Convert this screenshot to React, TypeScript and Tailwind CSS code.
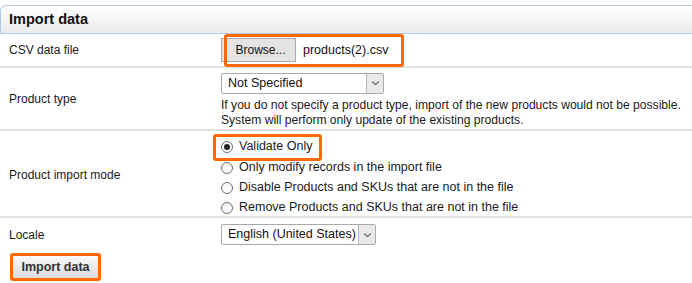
import React from 'react';

function Chevron() {
  return (
    <svg width="9" height="6" viewBox="0 0 9 6" fill="none">
      <path d="M1 1.5 L4.5 4.5 L8 1.5" stroke="#666" strokeWidth="1.1" />
    </svg>
  );
}

function Select({ value, width }: { value: string; width: string }) {
  return (
    <div className={`flex h-[21px] items-stretch rounded-[2px] border border-[#a9a9a9] bg-white ${width}`}>
      <span className="flex-1 overflow-hidden whitespace-nowrap pl-[6px] text-[12.5px] leading-[19px] text-[#111]">{value}</span>
      <span className="flex w-[17px] shrink-0 items-center justify-center border-l border-[#b5b5b5] bg-[#e9e9e9]">
        <Chevron />
      </span>
    </div>
  );
}

function Radio({ checked, label }: { checked?: boolean; label: string }) {
  return (
    <label className="flex h-[20px] items-center gap-[6px]">
      <span className="flex h-[12px] w-[12px] items-center justify-center rounded-full border border-[#6f6f6f] bg-gradient-to-b from-[#f4f4f4] to-white">
        {checked && <span className="h-[6px] w-[6px] rounded-full bg-[#222]" />}
      </span>
      <span className="text-[12.5px] text-[#1a1a1a]">{label}</span>
    </label>
  );
}

export default function App() {
  return (
    <div className="h-[283px] w-[692px] overflow-hidden bg-white pt-[5px] font-['Liberation_Sans',Arial,sans-serif] text-[12px] text-[#1a1a1a]">
      {/* Header */}
      <div className="flex h-[29px] items-center rounded-tl-[6px] border-b border-l border-t border-[#b3c7e3] bg-gradient-to-b from-white to-[#ebebeb] pl-[8px] text-[14.5px] font-bold text-[#111]">
        Import data
      </div>

      {/* CSV file */}
      <div className="relative flex h-[34px] items-center border-b-2 border-[#e2e2e2]">
        <div className="w-[221px] pl-[9px]">CSV data file</div>
        <div className="flex items-center">
          <span className="flex h-[24px] w-[75px] items-center justify-center border border-[#acacac] bg-[#e4e4e4] pl-[4px] text-[12px] text-[#111]">
            Browse...
          </span>
          <span className="ml-[7px] text-[12.5px] text-[#111]">products(2).csv</span>
        </div>
        <div className="absolute left-[224px] top-[0px] h-[33px] w-[180px] rounded-[3px] border-[3px] border-[#ff6a00]" />
      </div>

      {/* Product type */}
      <div className="flex h-[63px] items-center border-b-2 border-[#e2e2e2]">
        <div className="w-[221px] pl-[9px]">Product type</div>
        <div className="flex flex-col pt-[3px]">
          <Select value="Not Specified" width="w-[163px]" />
          <p className="mt-[4px] text-[12.1px] leading-[15px] text-[#1a1a1a]">
            If you do not specify a product type, import of the new products would not be possible.
            <br />
            System will perform only update of the existing products.
          </p>
        </div>
      </div>

      {/* Import mode */}
      <div className="relative flex h-[87px] items-center border-b-2 border-[#e2e2e2]">
        <div className="w-[221px] pl-[9px] pt-[2px]">Product import mode</div>
        <div className="flex flex-col pt-[7px]">
          <div className="mb-[1px]">
            <Radio checked label="Validate Only" />
          </div>
          <Radio label="Only modify records in the import file" />
          <Radio label="Disable Products and SKUs that are not in the file" />
          <Radio label="Remove Products and SKUs that are not in the file" />
        </div>
        <div className="absolute left-[213px] top-[3px] h-[27px] w-[109px] rounded-[3px] border-[3px] border-[#ff6a00]" />
      </div>

      {/* Locale */}
      <div className="flex h-[33px] items-center">
        <div className="w-[221px] pl-[9px]">Locale</div>
        <Select value="English (United States)" width="w-[155px]" />
      </div>

      {/* Submit */}
      <div className="pl-[10px] pt-[2px]">
        <button className="flex h-[28px] w-[91px] items-center justify-center rounded-[3px] border-[3px] border-[#ff6a00] bg-gradient-to-b from-[#fafafa] to-[#dcdcdc] text-[12.5px] font-bold text-[#333]">
          Import data
        </button>
      </div>
    </div>
  );
}
